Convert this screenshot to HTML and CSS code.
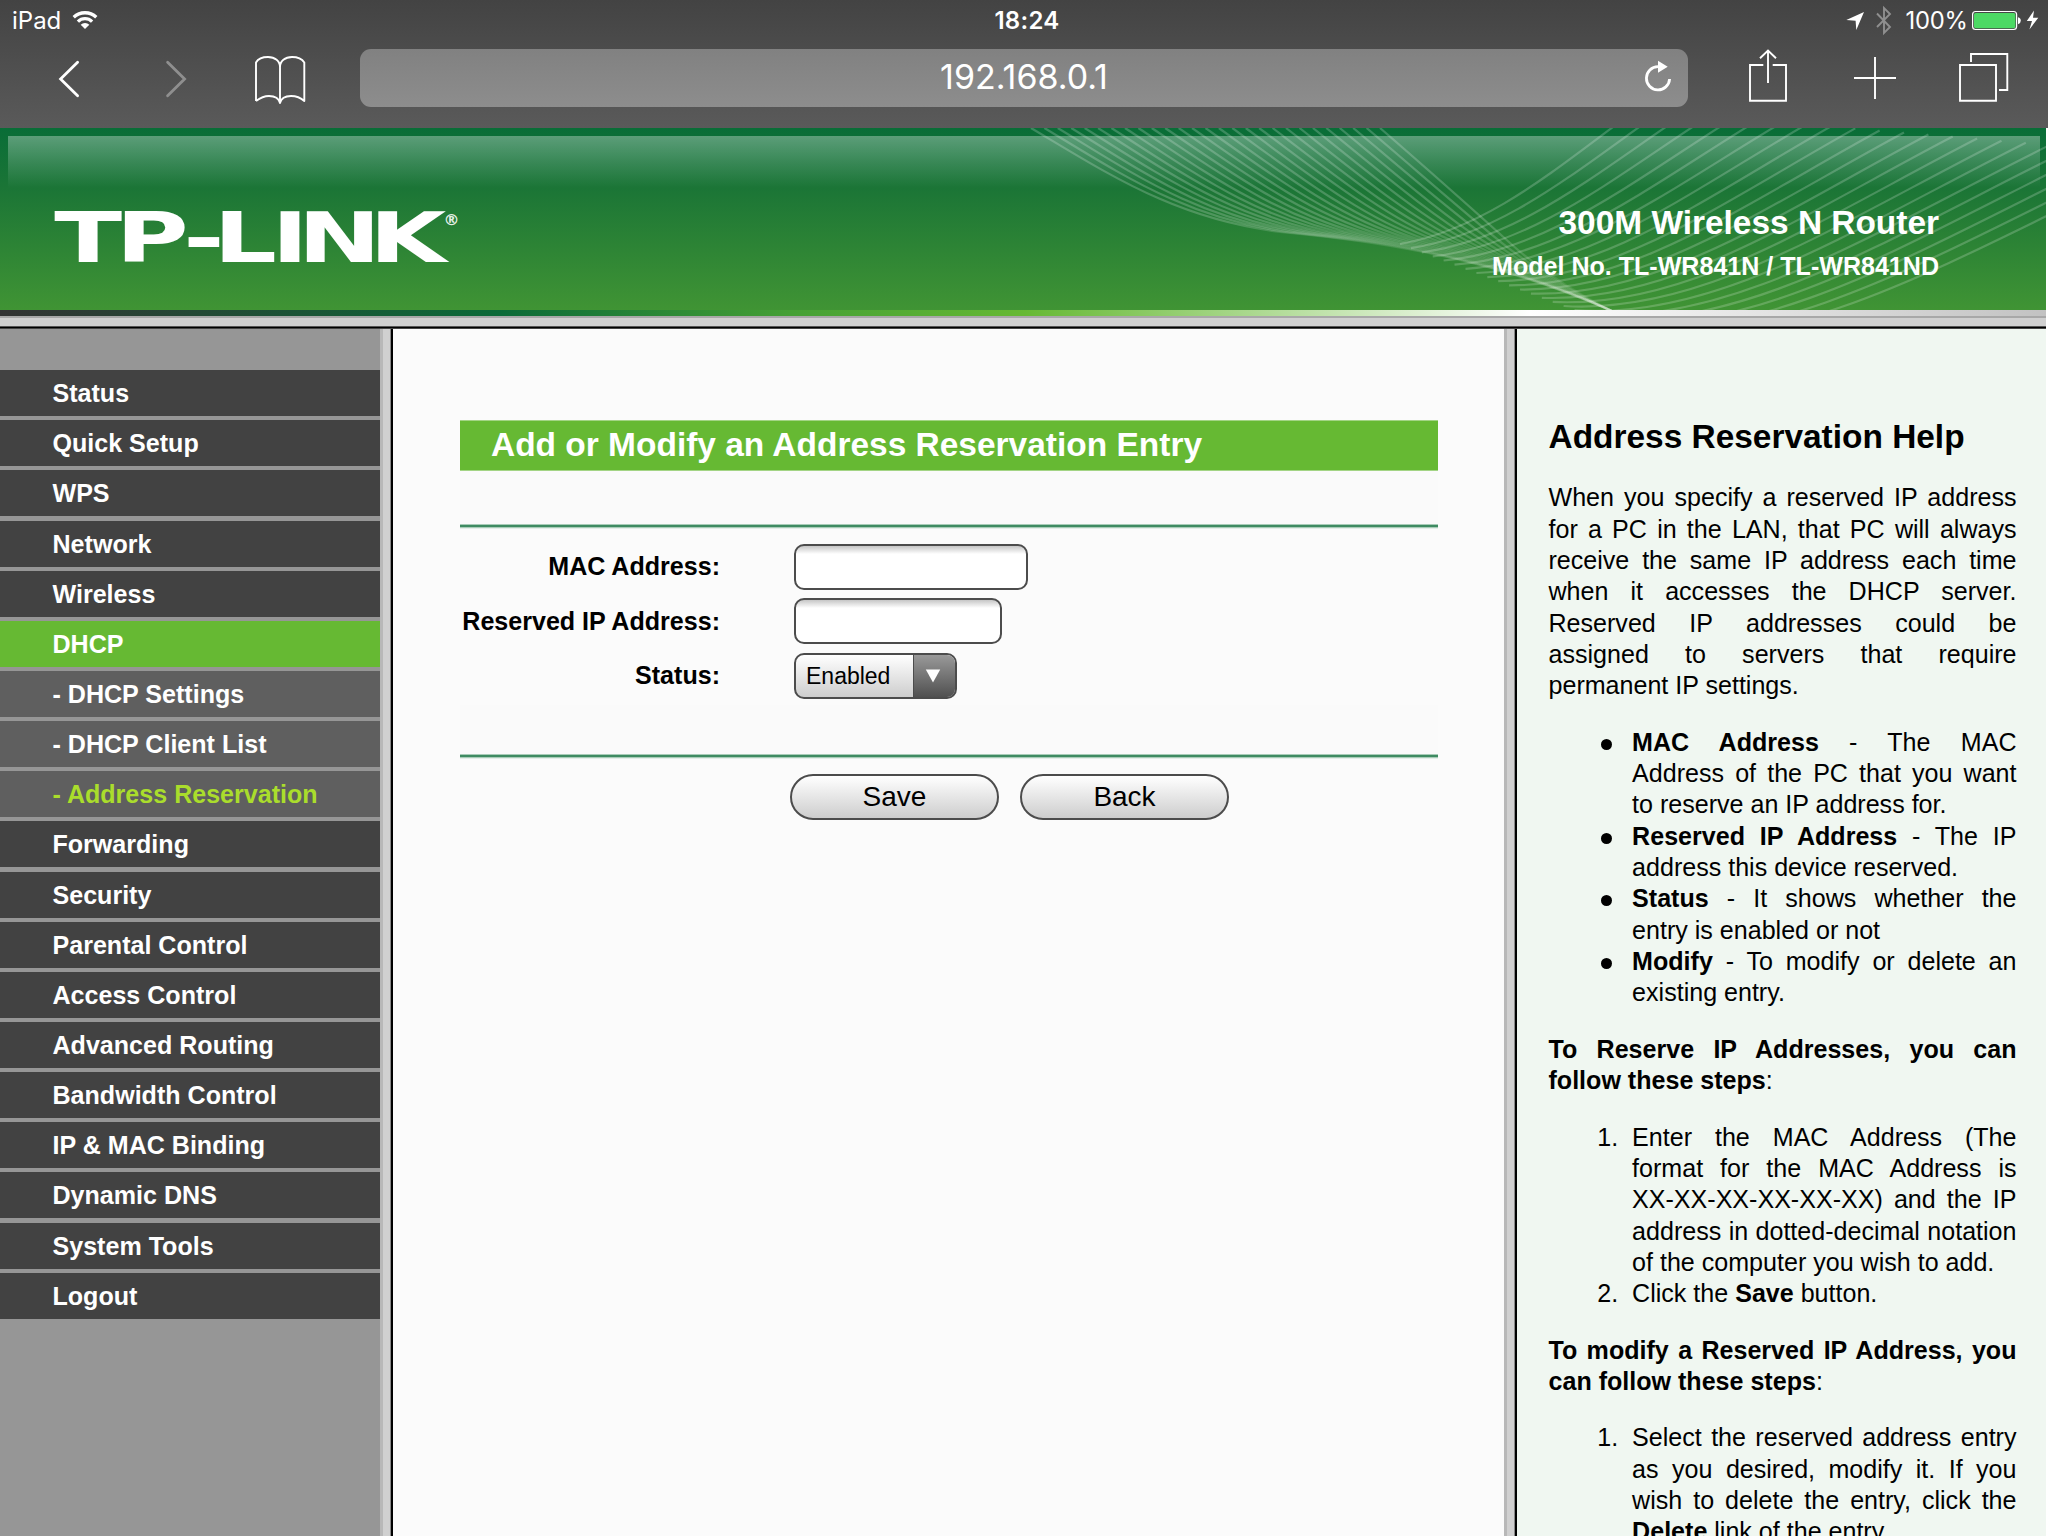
FILE: index.html
```html
<!DOCTYPE html>
<html lang="en">
<head>
<meta charset="utf-8">
<title>TL-WR841N</title>
<link rel="stylesheet" href="styles.css">
</head>
<body>
<header class="chrome">
  <div class="status">
    <div class="status-left">
      <span>iPad</span>
      <svg class="wifi" width="28" height="24" viewBox="70.5 8 28 24">
        <g fill="none" stroke="#fff" stroke-width="3.3">
          <path d="M73.2 17.3A16.3 16.3 0 0 1 95.8 17.3"/>
          <path d="M77.4 21.6A10.2 10.2 0 0 1 91.6 21.6"/>
        </g>
        <path d="M84.5 29L80.2 24.7A6 6 0 0 1 88.8 24.7Z" fill="#fff"/>
      </svg>
    </div>
    <div class="status-time">18:24</div>
    <div class="status-right">
      <svg width="56" height="42" viewBox="1840 0 56 42">
        <path d="M1846.3 20L1864 12L1856.3 30L1855.6 20.7Z" fill="#fff"/>
        <path d="M1877 13.5L1890 27L1884 33V8L1890 14L1877 27" fill="none" stroke="#8f8f8f" stroke-width="1.9"/>
      </svg>
      <span class="percent">100%</span>
      <svg width="80" height="42" viewBox="1968 0 80 42">
        <rect x="1972.6" y="11.5" width="44" height="18" rx="3" fill="none" stroke="#fff" stroke-width="1.2"/>
        <rect x="1974" y="13" width="41.4" height="15.2" rx="1.8" fill="#4cd964"/>
        <path d="M2018 17.3Q2020.8 18 2020.8 20.7T2018 24.2Z" fill="#fff"/>
        <path d="M2034 10.5L2026.8 21H2032L2029.4 29.4L2038.3 17.8H2033Z" fill="#fff"/>
      </svg>
    </div>
  </div>
  <div class="toolbar">
    <svg class="tool-back" width="40" height="70" viewBox="50 42 40 70"><path d="M77.6 62.3L60.6 79L77.6 95.7" fill="none" stroke="#fff" stroke-width="2.8" stroke-linecap="round"/></svg>
    <svg class="tool-forward" width="40" height="70" viewBox="156 42 40 70"><path d="M167.6 62.3L184.6 79L167.6 95.7" fill="none" stroke="#8f8f8f" stroke-width="2.8" stroke-linecap="round"/></svg>
    <svg class="tool-book" width="60" height="70" viewBox="250 42 60 70"><path d="M256 101V62.5C258 59 263 57 268 57C275 57 280 61 280 67C280 61 285 57 292 57C297 57 302 59 304.3 62.5V101C301 98 297 96 291 96C285 96 281 99 280 103C279 99 275 96 269 96C264 96 260 98 256 101M280 67V103" fill="none" stroke="#fff" stroke-width="1.9" stroke-linejoin="round"/></svg>
    <div class="url">
      <span class="url-text">192.168.0.1</span>
      <svg class="reload" width="36" height="40" viewBox="1640 59 36 40">
        <path d="M1669.6 80A11.6 11.6 0 1 1 1658 67.7" fill="none" stroke="#fff" stroke-width="2.8"/>
        <path d="M1658 61.7L1667.7 67.7L1658 73.7Z" fill="#fff"/>
      </svg>
    </div>
    <svg class="tool-share" width="56" height="70" viewBox="1740 42 56 70"><path d="M1763.3 65H1750V100.8H1786V65H1772.7M1768 83V50.5M1760 58.3L1768 50.5L1776 58.3" fill="none" stroke="#fff" stroke-width="1.9"/></svg>
    <svg class="tool-add" width="50" height="70" viewBox="1850 42 50 70"><path d="M1854 78H1896M1875 57V99" fill="none" stroke="#fff" stroke-width="1.9"/></svg>
    <svg class="tool-tabs" width="60" height="70" viewBox="1954 42 60 70"><path d="M1960 65H1996V100.8H1960ZM1971 62V54H2007.3V90H1999" fill="none" stroke="#fff" stroke-width="1.9"/></svg>
  </div>
</header>

<div class="page">
  <div class="banner">
    <div class="banner-shine"></div>
    <svg class="banner-waves" width="2046" height="182" viewBox="0 128 2046 182"></svg>
    <svg class="logo" width="420" height="70" viewBox="50 203 420 70">
      <text class="logo-name" transform="scale(1.45 1)" x="37.4 79.8 126.4 147.2 187.3 205.4 254.6" y="262">TP-LINK</text>
      <text class="logo-reg" x="443.5" y="225">®</text>
    </svg>
    <div class="product">
      <div class="product-name">300M Wireless N Router</div>
      <div class="product-model">Model No. TL-WR841N / TL-WR841ND</div>
    </div>
  </div>
  <div class="strip"></div>
  <div class="frame-line"></div>

  <div class="columns">
    <nav class="menu">
      <a class="item">Status</a>
      <a class="item">Quick Setup</a>
      <a class="item">WPS</a>
      <a class="item">Network</a>
      <a class="item">Wireless</a>
      <a class="item open">DHCP</a>
      <a class="item sub">- DHCP Settings</a>
      <a class="item sub">- DHCP Client List</a>
      <a class="item sub current">- Address Reservation</a>
      <a class="item">Forwarding</a>
      <a class="item">Security</a>
      <a class="item">Parental Control</a>
      <a class="item">Access Control</a>
      <a class="item">Advanced Routing</a>
      <a class="item">Bandwidth Control</a>
      <a class="item">IP &amp; MAC Binding</a>
      <a class="item">Dynamic DNS</a>
      <a class="item">System Tools</a>
      <a class="item">Logout</a>
    </nav>
    <div class="divider"></div>
    <main class="content">
      <h1 class="title">Add or Modify an Address Reservation Entry</h1>
      <div class="rule"></div>
      <form class="form">
        <div class="row"><label class="label">MAC Address:</label><input class="field mac" type="text"></div>
        <div class="row"><label class="label">Reserved IP Address:</label><input class="field ip" type="text"></div>
        <div class="row"><label class="label">Status:</label>
          <div class="select"><span class="select-value">Enabled</span><span class="select-arrow"><svg width="16" height="14" viewBox="0 0 16 14"><path d="M.8 .5H15.2L8 13.5Z" fill="#fff"/></svg></span></div>
        </div>
      </form>
      <div class="rule second"></div>
      <div class="actions">
        <button class="button" type="button">Save</button>
        <button class="button" type="button">Back</button>
      </div>
    </main>
    <div class="divider right"></div>
    <aside class="help">
      <h2>Address Reservation Help</h2>
      <p>When you specify a reserved IP address for a PC in the LAN, that PC will always receive the same IP address each time when it accesses the DHCP server. Reserved IP addresses could be assigned to servers that require permanent IP settings.</p>
      <ul>
        <li><b>MAC Address</b> - The MAC Address of the PC that you want to reserve an IP address for.</li>
        <li><b>Reserved IP Address</b> - The IP address this device reserved.</li>
        <li><b>Status</b> - It shows whether the entry is enabled or not</li>
        <li><b>Modify</b> - To modify or delete an existing entry.</li>
      </ul>
      <p><b>To Reserve IP Addresses, you can follow these steps</b>:</p>
      <ol>
        <li>Enter the MAC Address (The format for the MAC Address is <span class="keep">XX-XX-XX-XX-XX-XX)</span> and the IP address in dotted-decimal notation of the computer you wish to add.</li>
        <li>Click the <b>Save</b> button.</li>
      </ol>
      <p><b>To modify a Reserved IP Address, you can follow these steps</b>:</p>
      <ol>
        <li>Select the reserved address entry as you desired, modify it. If you wish to delete the entry, click the <b>Delete</b> link of the entry.</li>
      </ol>
    </aside>
  </div>
</div>
<script src="waves.js"></script>
</body>
</html>
```
FILE: styles.css
```css
* { box-sizing: border-box; }

html, body { height: 100%; }

body {
  margin: 0;
  overflow: hidden;
  background: #fff;
  font-family: "Liberation Sans", Arial, sans-serif;
  font-size: 25.07px;
  line-height: 31.35px;
  color: #000;
}

svg { display: block; flex: none; }

/* Browser chrome */
.chrome {
  height: 128px;
  background: linear-gradient(#434343, #5a5a5a);
  color: #fff;
  font-family: Inter, Roboto, sans-serif;
}

.status {
  display: grid;
  grid-template-columns: 1fr auto 1fr;
  height: 42px;
  align-items: center;
  font-size: 24px;
  line-height: 42px;
}
.status-left { display: flex; align-items: center; padding-left: 12px; }
.wifi { margin-left: 9.5px; margin-top: -2px; }
.status-time { font-weight: 600; padding-left: 6px; letter-spacing: .3px; }
.status-right { display: flex; justify-content: flex-end; }
.percent { width: 72px; padding-left: 9.5px; font-size: 23.8px; letter-spacing: -0.2px; white-space: nowrap; }

.toolbar { display: flex; height: 86px; }
.tool-back { margin-left: 50px; }
.tool-forward { margin-left: 66px; }
.tool-book { margin-left: 54px; }
.tool-share { margin-left: 52px; }
.tool-add { margin-left: 54px; }
.tool-tabs { margin-left: 54px; }

.url {
  display: flex;
  align-items: center;
  width: 1328px;
  height: 58px;
  margin: 7px 0 0 50px;
  padding: 0 12px 0 48px;
  border-radius: 11px;
  background: linear-gradient(#818181, #8d8d8d);
}
.url-text { flex: 1; text-align: center; font-size: 34px; line-height: 56px; height: 58px; }

/* Router page */
.page {
  display: flex;
  flex-direction: column;
  width: 2046px;
  height: 1408px;
}

.banner {
  position: relative;
  display: flex;
  justify-content: space-between;
  height: 182px;
  background: linear-gradient(#096d37 0, #1b7536 60px, #409434 182px);
}
.banner-shine {
  position: absolute;
  inset: 8px 6px auto 8px;
  height: 52px;
  background: linear-gradient(rgba(255, 255, 255, .33), rgba(255, 255, 255, .16) 50%, rgba(255, 255, 255, 0));
}
.banner-waves { position: absolute; inset: 0; }
.wave { fill: none; stroke: #fff; stroke-width: 2.2; stroke-opacity: .2; }

.logo { position: relative; margin: 75px 0 0 50px; }
.logo-name {
  font: bold 68.6px "DejaVu Sans", sans-serif;
  fill: #fff;
}
.logo-reg { font: bold 16px "DejaVu Sans", sans-serif; fill: #fff; fill-opacity: .9; }

.product {
  position: relative;
  padding: 74px 107px 0 0;
  color: #fff;
  font-weight: bold;
  text-align: right;
}
.product-name { font-size: 33.44px; line-height: 42px; }
.product-model { line-height: 30px; margin-top: 7px; }

.strip {
  height: 6px;
  background: linear-gradient(90deg, #333 0, #0b6a38 500px, #45a035 790px, #66b933 1025px, #fff 1530px, #c2c2c2 2046px);
}
.frame-line {
  height: 13px;
  background: linear-gradient(#a8a8a8 0 2px, #d0d0d0 2px 10px, #555 10px 11px, #000 11px 12px, #444 12px);
}

.columns { display: flex; flex: 1; min-height: 0; }

/* Menu */
.menu {
  display: flex;
  flex-direction: column;
  gap: 4.15px;
  width: 380px;
  padding-top: 41.15px;
  background: #969696;
}
.item {
  flex: none;
  height: 46px;
  padding-left: 52.5px;
  background: #424242;
  color: #fff;
  font-weight: bold;
  line-height: 46px;
}
.sub { background: #5f5f5f; }
.open { background: #66b933; }
.current { color: #aadd2c; }

.divider {
  width: 13px;
  background: linear-gradient(90deg, #b8b8b8 0 3px, #d0d0d0 3px 10px, #888 10px 11px, #000 11px);
}

/* Form */
.content { width: 1111px; padding: 91px 0 0 67px; background: #fbfbfb; }
.content > * { width: 978px; }
.title {
  height: 51px;
  margin: 0;
  padding-left: 31px;
  border: solid #a3d485;
  border-width: 1px 0;
  background: #66b933;
  color: #fff;
  font-size: 33.48px;
  line-height: 47px;
}
.rule {
  height: 58px;
  background: linear-gradient(#fafafa 0 53px, #a8ccb8 53px 54px, #3f8b62 54px 56px, #a8ccb8 56px 57px, #e5eee9 57px);
}
.second { height: 54px; background-position: 0 -4px; background-size: 100% 58px; margin-top: 6px; }

.form { padding-top: 15px; }
.row { display: flex; align-items: center; height: 46px; }
.row + .row { margin-top: 8.3px; }
.label { width: 260px; margin-right: 74px; font-weight: bold; text-align: right; white-space: nowrap; }
.field {
  height: 46px;
  border: 2px solid #4c4c4c;
  border-radius: 10px;
  background: linear-gradient(#c6c6c6, #fff 8px);
}
.mac { width: 234px; }
.ip { width: 208px; }
.select {
  display: flex;
  width: 163px;
  height: 46px;
  overflow: hidden;
  border: 2px solid #4c4c4c;
  border-radius: 10px;
  background: linear-gradient(#fff, #cdcdcd);
  font-size: 23px;
  line-height: 43px;
}
.select-value { flex: 1; padding-left: 10px; }
.select-arrow {
  display: flex;
  justify-content: center;
  width: 42px;
  padding: 14px 3px 0 0;
  border-left: 1px solid #4c4c4c;
  background: linear-gradient(#999, #505050);
}

.actions { display: flex; gap: 21px; padding: 15px 0 0 330px; }
.button {
  width: 209px;
  height: 46px;
  padding: 0;
  border: 2px solid #4c4c4c;
  border-radius: 23px;
  background: linear-gradient(#fff, #cdcdcd);
  color: #000;
  font: 28px/42px "Liberation Sans", Arial, sans-serif;
}

/* Help */
@counter-style steps {
  system: extends decimal;
  suffix: ".  ";
}
.help {
  flex: 1;
  overflow: hidden;
  padding: 88px 29.5px 0 31.5px;
  background: #f0f7f1;
  text-align: justify;
}
.help h2 { margin: 0 0 26.2px; font-size: 33.44px; line-height: 39px; text-align: left; white-space: nowrap; }
.help p { margin: 0 0 25.07px; }
.help ul, .help ol { margin: 0 0 25.07px; padding-left: 83.6px; }
.help ul { list-style: none; }
.help ul li::before {
  content: "";
  display: inline-block;
  width: 11px;
  height: 11px;
  margin: 0 20px 1px -31px;
  border-radius: 50%;
  background: #000;
}
.help ol { list-style: steps; }
.keep { white-space: nowrap; }
```
FILE: waves.js
```js
// Two families of hairlines that sweep across the banner.
const NS = "http://www.w3.org/2000/svg";
const svg = document.querySelector(".banner-waves");
const mix = (a, b, t) => a + (b - a) * t;

function node(name, attrs, parent) {
  const el = document.createElementNS(NS, name);
  for (const key in attrs) el.setAttribute(key, attrs[key]);
  parent.appendChild(el);
  return el;
}

function blend(from, to, t) {
  return from.map((p, i) => mix(p[0], to[i][0], t).toFixed(1) + " " + mix(p[1], to[i][1], t).toFixed(1));
}

// Each falling line fades out where the family bunches together.
const fallA = [[1031, 128], [1110, 175], [1180, 222], [1290, 233], [1500, 262], [1612, 311]];
const fallB = [[1380, 128], [1440, 180], [1480, 216], [1510, 243], [1570, 290], [1612, 311]];
for (let i = 0; i < 27; i++) {
  const t = i / 26;
  const start = mix(1230, 1480, t);
  const grad = node("linearGradient", {
    id: "fade" + i, gradientUnits: "userSpaceOnUse", x1: start, x2: start + 130, y1: 0, y2: 0
  }, svg);
  node("stop", { offset: 0, "stop-color": "#fff", "stop-opacity": 1 }, grad);
  node("stop", { offset: 1, "stop-color": "#fff", "stop-opacity": .2 }, grad);
  const p = blend(fallA, fallB, t);
  node("path", {
    class: "wave",
    style: `stroke: url(#fade${i})`,
    d: `M${p[0]}C${p[1]} ${p[2]} ${p[3]}S${p[4]} ${p[5]}`
  }, svg);
}

const riseA = [[1400, 244], [1490, 228], [1560, 165], [1636, 110]];
const riseB = [[1640, 335], [1800, 355], [1960, 255], [2172, 155]];
for (let i = 0; i < 23; i++) {
  const p = blend(riseA, riseB, i / 22);
  node("path", { class: "wave", d: `M${p[0]}C${p[1]} ${p[2]} ${p[3]}` }, svg);
}
```
